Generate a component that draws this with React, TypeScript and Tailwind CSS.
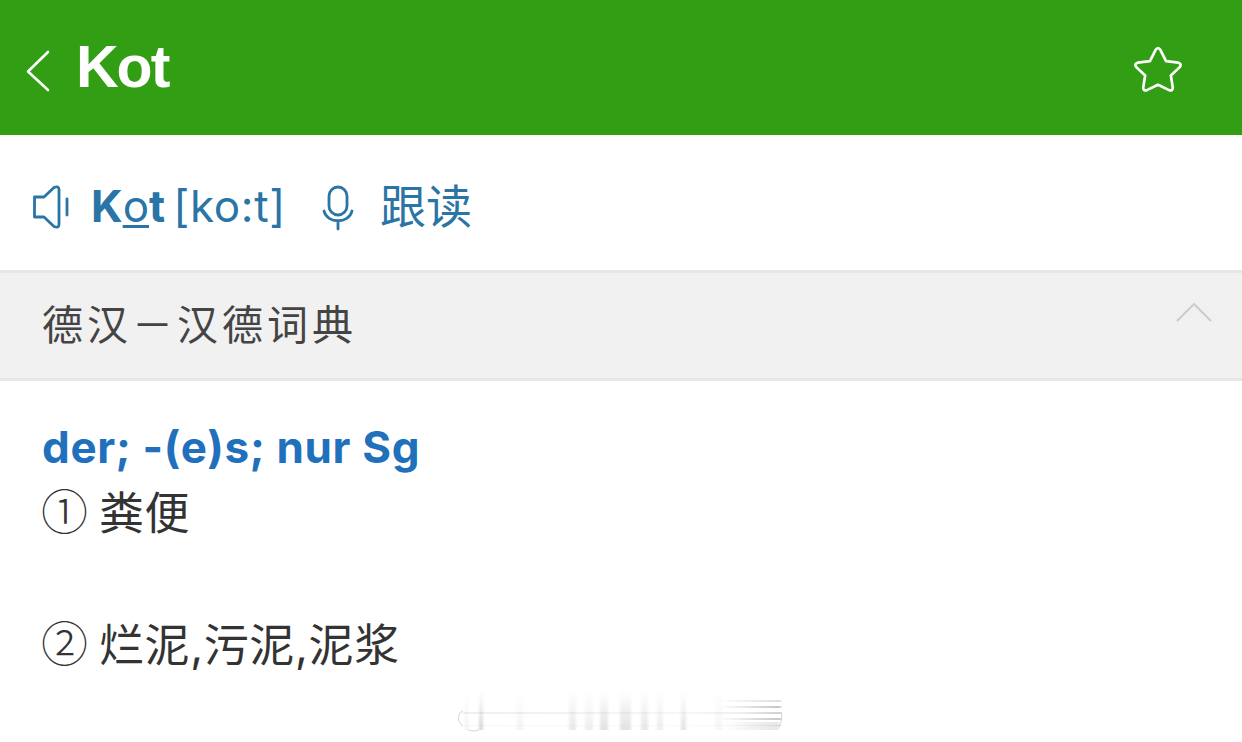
import type {ReactNode} from "react";

const meanings = [
  {mark: "①", text: ["粪便"]},
  {mark: "②", text: ["烂泥", "污泥", "泥浆"]},
];

// Faded vertical bars of the watermark: x, width, opacity
const bars = [
  [10, 3, 0.06],
  [24, 4, 0.18],
  [62, 6, 0.05],
  [114, 7, 0.1],
  [130, 8, 0.07],
  [145, 8, 0.13],
  [165, 11, 0.13],
  [186, 7, 0.11],
  [202, 6, 0.08],
  [226, 5, 0.12],
  [260, 7, 0.04],
];

function Icon({className, box, width, children}: {className: string; box: string; width: number; children: ReactNode}) {
  return (
    <svg
      className={className}
      fill="none"
      stroke="currentColor"
      strokeLinecap="round"
      strokeLinejoin="round"
      strokeWidth={width}
      viewBox={box}
    >
      {children}
    </svg>
  );
}

function Watermark() {
  return (
    <svg className="mt-[12px] ml-[455px] h-[48px] w-[332px]" fill="none" viewBox="0 0 332 48">
      <defs>
        <linearGradient id="bar" x1="0" x2="0" y1="0" y2="1">
          <stop offset="0" stopColor="#777" stopOpacity="0" />
          <stop offset="1" stopColor="#777" />
        </linearGradient>
        <linearGradient id="line" x1="0" x2="1" y1="0" y2="0">
          <stop offset="0" stopColor="#999" stopOpacity="0.2" />
          <stop offset="0.7" stopColor="#999" stopOpacity="0.1" />
          <stop offset="0.88" stopColor="#999" stopOpacity="0.2" />
          <stop offset="1" stopColor="#999" stopOpacity="0.6" />
        </linearGradient>
        <linearGradient id="tail" x1="0" x2="1" y1="0" y2="0">
          <stop offset="0" stopColor="#888" stopOpacity="0" />
          <stop offset="1" stopColor="#888" stopOpacity="0.7" />
        </linearGradient>
        <filter id="soft">
          <feGaussianBlur stdDeviation="1.2 0.5" />
        </filter>
      </defs>
      <g filter="url(#soft)">
        {bars.map(([x, w, opacity]) => (
          <rect key={x} fill="url(#bar)" height="38" opacity={opacity * 1.6} width={w} x={x} y="1" />
        ))}
        <rect fill="url(#line)" height="2" opacity="0.8" width="318" x="8" y="21" />
        <rect fill="url(#line)" height="1" opacity="0.4" width="318" x="8" y="34" />
        <rect fill="url(#tail)" height="2" opacity="0.7" width="62" x="264" y="15" />
        <rect fill="url(#tail)" height="2" opacity="0.7" width="62" x="264" y="27" />
        <rect fill="url(#tail)" height="2" opacity="0.4" width="62" x="264" y="9" />
        <rect fill="url(#tail)" height="8" opacity="0.3" width="55" x="269" y="31" />
      </g>
      <path d="M8 20c-6 2-6 12 0 15M13 39q6 2 11 0M326 21c1 5 1 9-2 15" stroke="#999" strokeOpacity="0.4" />
    </svg>
  );
}

export default function App() {
  return (
    <div className="flex h-[742px] w-[1242px] flex-col overflow-hidden bg-white font-['Inter','Noto_Sans_CJK_SC',sans-serif] text-[#333]">
      <header className="flex h-[135px] shrink-0 items-center bg-[#319e13] pl-6 text-white">
        <Icon box="0 0 28 44" className="mt-2 h-[44px] w-[28px]" width={2.6}>
          <path d="M24 2 4 21.500l20 18.500" />
        </Icon>
        <h1 className="-mt-0.5 ml-[24px] font-['Liberation_Sans',sans-serif] text-[59px] leading-[60px] font-bold tracking-[-2px]">
          Kot
        </h1>
        <Icon box="0 0 50 50" className="mt-[5px] mr-[60px] ml-auto size-[48px]" width={2.8}>
          <path d="M22.4 4.2q2.6-4 5.2 0l5.8 11.6 12.8 1.6q4 1.2 1.4 4.6l-9.2 8.8 2 12.6q-.2 3.8-3.8 2.6L25 40.4 13.400 46q-3.600 1.200-3.800-2.600l2-12.600L2.400 22q-2.600-3.400 1.400-4.600l12.800-1.600z" />
        </Icon>
      </header>

      <div className="flex h-[135px] shrink-0 items-center pt-2 pl-8 text-[44px] leading-[60px] text-[#2a74a6]">
        <Icon box="0 0 38 44" className="h-[44px] w-[38px]" width={2.8}>
          <path d="M2.5 12h9.5L22 2.5q5-2 5 2v35q0 4-5 2L12 32H2.5zM35 14v16" />
        </Icon>
        <span className="-mt-0.5 ml-[21px] font-bold">
          K<span className="font-normal underline decoration-[3px] underline-offset-[3px]">o</span>t
        </span>
        <span className="-mt-0.5 ml-[8px] tracking-[0.7px]">[ko:t]</span>
        <Icon box="0 0 32 46" className="mt-0.5 ml-[36px] h-[46px] w-[32px]" width={2.8}>
          <rect height="28" rx="9" width="18" x="7" y="2" />
          <path d="M2 26c3 13 25 13 28 0M16 36v8" />
        </Icon>
        <span className="-mt-0.5 ml-[26px] text-[46px]">跟读</span>
      </div>

      <div className="flex h-[111px] shrink-0 justify-between border-y-3 border-[#e7e7e7] bg-[#f1f1f1] pr-[30px] pl-[42px]">
        <h2 className="pt-[22px] text-[41px] leading-[60px] tracking-[4px] text-[#444]">德汉－汉德词典</h2>
        <Icon box="0 0 36 20" className="mt-[29px] h-[20px] w-[36px] text-[#ccc]" width={2}>
          <path d="M1.5 18.500 18 2l16.500 16.500" />
        </Icon>
      </div>

      <main className="flex flex-col pt-[33px] pl-[42px] text-[45px] leading-[66px]">
        <p className="text-[44px] font-bold tracking-[0.65px] text-[#2070bb]">der; -(e)s; nur Sg</p>
        {meanings.map(({mark, text}) => (
          <p key={mark} className="mb-[66px] flex pt-px last:mb-0 last:-mt-px">
            <span className="-mt-[5px] -ml-[1px] h-[66px] w-[58px] font-['Noto_Sans_CJK_SC',sans-serif] text-[47px] font-light">
              {mark}
            </span>
            <span className="tracking-[0.6px]">{text.join(",")}</span>
          </p>
        ))}
      </main>
      <div className="h-0">
        <Watermark />
      </div>
    </div>
  );
}
